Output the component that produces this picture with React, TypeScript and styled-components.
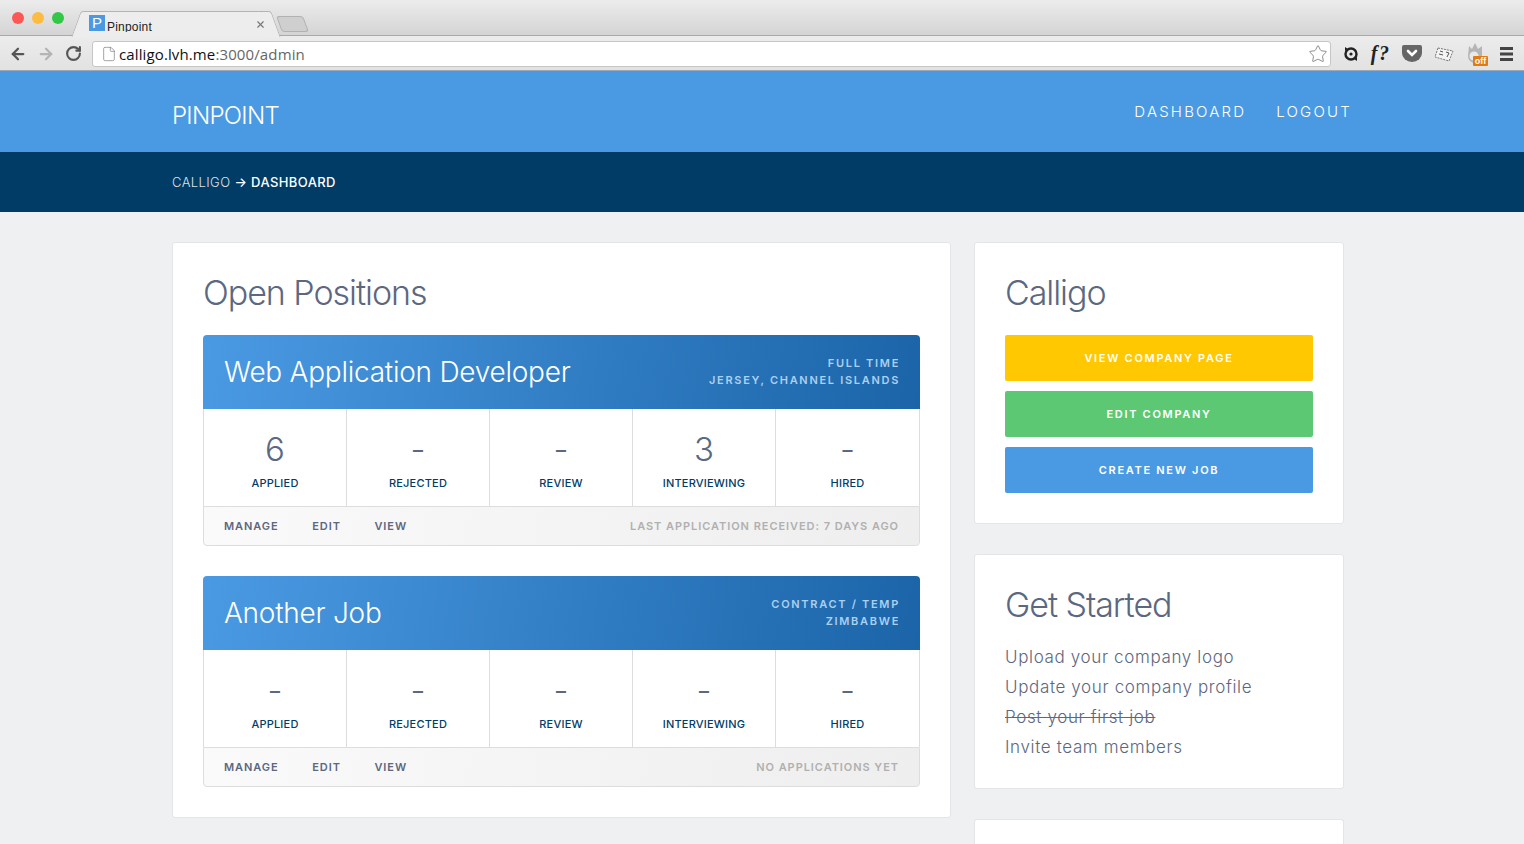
import React from 'react';
import styled, { createGlobalStyle } from 'styled-components';
import { ArrowLeft, ArrowRight, File, RotateCw, Star, X } from 'lucide-react';

const GlobalStyle = createGlobalStyle`
  html, body {
    margin: 0;
    padding: 0;
    height: 844px;
    overflow: hidden;
    background: #eff0f2;
    font-family: Inter, 'Noto Sans', sans-serif;
    color: #5c6780;
  }
  * {
    box-sizing: border-box;
  }
`;

const TabStrip = styled.div`
  height: 36px;
  padding: 11px 0 0 82px;
  display: flex;
  align-items: flex-start;
  background: linear-gradient(#ececec, #d4d4d4);
  border-bottom: 1px solid #a9a9a9;
`;

const Lights = styled.div`
  position: absolute;
  top: 12px;
  left: 12px;
  display: flex;
  gap: 8px;
`;

const Light = styled.span<{ color: string }>`
  width: 12px;
  height: 12px;
  border-radius: 50%;
  background: ${({ color }) => color};
`;

const Tab = styled.div`
  position: relative;
  width: 188px;
  height: 25px;
  background: #ededed;
  border-top: 1px solid #b4b4b4;
  border-radius: 3px 3px 0 0;
  display: flex;
  align-items: flex-start;
  padding: 3px 0 0 7px;
  overflow: visible;

  &::before,
  &::after {
    content: '';
    position: absolute;
    top: -1px;
    width: 12px;
    height: 25px;
    background: #ededed;
    border-top: 1px solid #b4b4b4;
  }
  &::before {
    left: -6px;
    transform: skewX(-20deg);
    border-left: 1px solid #b4b4b4;
    border-radius: 3px 0 0 0;
  }
  &::after {
    right: -6px;
    transform: skewX(20deg);
    border-right: 1px solid #b4b4b4;
    border-radius: 0 3px 0 0;
  }
`;

const Favicon = styled.span`
  position: relative;
  z-index: 1;
  width: 16px;
  height: 16px;
  background: #4a9ae3;
  color: #fff;
  font: 15px/16px 'Liberation Sans', sans-serif;
  text-align: center;
`;

const TabTitle = styled.span`
  position: relative;
  z-index: 1;
  margin-left: 2px;
  height: 17px;
  overflow: hidden;
  font: 12px/25px 'Liberation Sans', sans-serif;
  letter-spacing: 0.2px;
  color: #222;
  flex: 1;
`;

const TabClose = styled.span`
  position: relative;
  z-index: 1;
  margin: 4px 4px 0 0;
  display: flex;
  color: #777;
`;

const NewTab = styled.div`
  width: 27px;
  height: 16px;
  margin: 5px 0 0 9px;
  background: #cfcfcf;
  border: 1px solid #b2b2b2;
  border-radius: 3px;
  transform: skewX(20deg);
`;

const Toolbar = styled.div`
  height: 35px;
  display: flex;
  align-items: center;
  padding: 1px 11px 0 9px;
  background: linear-gradient(#ececec, #e2e2e2);
  border-bottom: 1px solid #9aa8b8;
`;

const NavIcon = styled.span<{ muted?: boolean }>`
  display: flex;
  width: 28px;
  color: ${({ muted }) => (muted ? '#b4b4b4' : '#555')};
`;

const AddressBar = styled.div`
  width: 1239px;
  height: 26px;
  margin-left: -1px;
  display: flex;
  align-items: center;
  padding: 0 2px 0 8px;
  background: #fff;
  border: 1px solid #c6c6c6;
  border-radius: 3px;
`;

const Url = styled.div`
  flex: 1;
  margin-left: 2px;
  font: 15px 'Open Sans', sans-serif;
  letter-spacing: 0.12px;
  color: #666;
`;

const UrlHost = styled.span`
  color: #111;
`;

const Extensions = styled.div`
  flex: 1;
  display: flex;
  align-items: center;
  justify-content: space-between;
  padding-left: 12px;
`;

const FontQuery = styled.span`
  font: italic 700 20px 'Liberation Serif', serif;
  color: #222;
  letter-spacing: 1.5px;
`;

const OffIcon = styled.span`
  position: relative;
  display: flex;
  width: 22px;
  height: 24px;
`;

const OffBadge = styled.span`
  position: absolute;
  right: 0;
  bottom: 0;
  width: 15px;
  height: 10px;
  background: #e07b10;
  border-radius: 1px;
  color: #fff;
  font: 700 9px/10px 'Liberation Sans', sans-serif;
  text-align: center;
`;

const Header = styled.header`
  height: 81px;
  padding: 0 172px;
  display: flex;
  justify-content: space-between;
  align-items: flex-start;
  background: #4a9ae3;
  color: #fff;
`;

const Brand = styled.div`
  margin-top: 29px;
  font-size: 24px;
  line-height: 32px;
  font-weight: 300;
  letter-spacing: -0.7px;
`;

const Nav = styled.nav`
  display: flex;
  gap: 30px;
  margin-top: 31px;
`;

const NavLink = styled.a`
  font-size: 15px;
  line-height: 20px;
  font-weight: 300;
  letter-spacing: 2.2px;
`;

const SubNav = styled.div`
  height: 60px;
  padding-left: 172px;
  display: flex;
  align-items: center;
  gap: 4px;
  background: #003c66;
  color: #fff;
  font-size: 13px;
  letter-spacing: 0.4px;
`;

const Crumb = styled.span<{ active?: boolean }>`
  font-weight: ${({ active }) => (active ? 500 : 300)};
  opacity: ${({ active }) => (active ? 1 : 0.85)};
`;

const Page = styled.main`
  display: grid;
  grid-template-columns: 779px 370px;
  gap: 23px;
  padding: 30px 0 0 172px;
  align-items: start;
`;

const Column = styled.div`
  display: flex;
  flex-direction: column;
  gap: 30px;
`;

const Card = styled.section`
  padding: 31px 30px 30px;
  background: #fff;
  border: 1px solid #e4e5e8;
  border-radius: 3px;
`;

const CardTitle = styled.h2`
  margin: 0 0 21px;
  height: 40px;
  font-size: 34px;
  line-height: 38px;
  font-weight: 300;
  letter-spacing: -1.05px;
  color: #5c6780;
`;

const Job = styled.article`
  margin-bottom: 30px;

  &:last-child {
    margin-bottom: 0;
  }
`;

const JobHeader = styled.div`
  height: 74px;
  padding: 0 20px 0 21px;
  display: flex;
  justify-content: space-between;
  align-items: center;
  border-radius: 4px 4px 0 0;
  background: linear-gradient(100deg, #4a9ae3, #1b64a8);
  color: #fff;
`;

const JobTitle = styled.h3`
  margin: 0;
  font-size: 28px;
  font-weight: 300;
  letter-spacing: -0.25px;
`;

const JobMeta = styled.div`
  text-align: right;
  font-size: 11px;
  line-height: 17px;
  font-weight: 600;
  letter-spacing: 1.7px;
  color: #acd0f0;
`;

const Stats = styled.div`
  display: grid;
  grid-template-columns: repeat(5, 1fr);
  height: 97px;
  border-left: 1px solid #ddd;
  border-right: 1px solid #ddd;
`;

const Stat = styled.div`
  padding-top: 20px;
  display: flex;
  flex-direction: column;
  align-items: center;
  border-right: 1px solid #ddd;

  &:last-child {
    border-right: 0;
  }
`;

const StatValue = styled.div`
  height: 40px;
  font-size: 33px;
  line-height: 40px;
  font-weight: 300;
  color: #5c6780;
`;

const StatLabel = styled.div`
  margin-top: 7px;
  font-size: 11px;
  line-height: 14px;
  font-weight: 500;
  letter-spacing: 0.2px;
  color: #003c66;
`;

const JobFooter = styled.div`
  height: 40px;
  padding: 0 20px;
  display: flex;
  align-items: center;
  gap: 33.5px;
  background: linear-gradient(100deg, #fafafa, #eeeeee);
  border: 1px solid #ddd;
  border-radius: 0 0 4px 4px;
  font-size: 11px;
  font-weight: 600;
  letter-spacing: 0.95px;
`;

const FooterLink = styled.a`
  color: #5c6780;
`;

const FooterNote = styled.span`
  margin-left: auto;
  color: #b0b0b0;
`;

const ActionButton = styled.a<{ color: string }>`
  height: 46px;
  margin-bottom: 10px;
  display: flex;
  align-items: center;
  justify-content: center;
  border-radius: 2px;
  background: ${({ color }) => color};
  color: #fff;
  font-size: 11px;
  font-weight: 600;
  letter-spacing: 1.7px;

  &:last-child {
    margin-bottom: 0;
  }
`;

const Steps = styled.ul`
  list-style: none;
  margin: -5px 0 -4px;
  padding: 0;
`;

const Step = styled.li<{ done?: boolean }>`
  height: 30px;
  font-size: 17px;
  line-height: 30px;
  font-weight: 300;
  letter-spacing: 0.64px;
  text-decoration: ${({ done }) => (done ? 'line-through' : 'none')};
`;

const EmptyCard = styled(Card)`
  height: 25px;
  padding: 0;
  border-bottom: 0;
  border-radius: 3px 3px 0 0;
`;

const STATUSES = ['Applied', 'Rejected', 'Review', 'Interviewing', 'Hired'];

const JOBS = [
  {
    title: 'Web Application Developer',
    type: 'Full Time',
    place: 'Jersey, Channel Islands',
    counts: ['6', '-', '-', '3', '-'],
    note: 'Last application received: 7 days ago',
  },
  {
    title: 'Another Job',
    type: 'Contract / Temp',
    place: 'Zimbabwe',
    counts: ['-', '-', '-', '-', '-'],
    note: 'No applications yet',
  },
];

const STEPS = [
  { text: 'Upload your company logo' },
  { text: 'Update your company profile' },
  { text: 'Post your first job', done: true },
  { text: 'Invite team members' },
];

const BrowserChrome: React.FC = () => (
  <>
    <Lights>
      <Light color="#fc5753" />
      <Light color="#fdbc40" />
      <Light color="#33c748" />
    </Lights>
    <TabStrip>
      <Tab>
        <Favicon>P</Favicon>
        <TabTitle>Pinpoint</TabTitle>
        <TabClose>
          <X size={11} strokeWidth={2.5} />
        </TabClose>
      </Tab>
      <NewTab />
    </TabStrip>
    <Toolbar>
      <NavIcon>
        <ArrowLeft size={18} strokeWidth={3} />
      </NavIcon>
      <NavIcon muted>
        <ArrowRight size={18} strokeWidth={3} />
      </NavIcon>
      <NavIcon>
        <RotateCw size={17} strokeWidth={3} />
      </NavIcon>
      <AddressBar>
        <File size={16} strokeWidth={1} color="#777" />
        <Url>
          <UrlHost>calligo.lvh.me</UrlHost>:3000/admin
        </Url>
        <Star size={20} strokeWidth={1} color="#777" />
      </AddressBar>
      <Extensions>
        <svg width="16" height="16" viewBox="0 0 16 16" fill="none">
          <circle cx="8" cy="8" r="5.5" stroke="#222" strokeWidth="2.4" />
          <circle cx="8" cy="8" r="1.6" fill="#222" />
          <path d="M2 1l3 2-3 2zM14 15l-3-2 3-2z" fill="#222" />
        </svg>
        <FontQuery>f?</FontQuery>
        <svg width="20" height="17" viewBox="0 0 20 17">
          <path d="M2 0h16a2 2 0 012 2v6a10 9 0 01-20 0V2a2 2 0 012-2z" fill="#666" />
          <path d="M6 6l4 4 4-4" fill="none" stroke="#fff" strokeWidth="2.6" strokeLinecap="round" />
        </svg>
        <svg width="20" height="16" viewBox="0 0 20 16" fill="none">
          <path d="M4 2l15 3-4 10L1 11z" fill="#f4f4f4" stroke="#777" strokeDasharray="2 1" />
          <path d="M6 5l3 1M5 8l4 1M12 6l3 1-2 4" stroke="#555" />
        </svg>
        <OffIcon>
          <svg width="20" height="22" viewBox="0 0 20 22">
            <path d="M3 4l3 3 3-6 3 6 4-3v10a7 7 0 01-14 0z" fill="#b5b5b5" />
            <circle cx="8" cy="14" r="4.5" fill="#e9e9e9" />
          </svg>
          <OffBadge>off</OffBadge>
        </OffIcon>
        <svg width="13" height="14" viewBox="0 0 13 14">
          <path d="M0 0h13v3H0zM0 5.5h13v3H0zM0 11h13v3H0z" fill="#444" />
        </svg>
      </Extensions>
    </Toolbar>
  </>
);

const JobCard: React.FC<{ job: (typeof JOBS)[number] }> = ({ job }) => (
  <Job>
    <JobHeader>
      <JobTitle>{job.title}</JobTitle>
      <JobMeta>
        {job.type.toUpperCase()}
        <br />
        {job.place.toUpperCase()}
      </JobMeta>
    </JobHeader>
    <Stats>
      {STATUSES.map((status, i) => (
        <Stat key={status}>
          <StatValue>{job.counts[i]}</StatValue>
          <StatLabel>{status.toUpperCase()}</StatLabel>
        </Stat>
      ))}
    </Stats>
    <JobFooter>
      <FooterLink>MANAGE</FooterLink>
      <FooterLink>EDIT</FooterLink>
      <FooterLink>VIEW</FooterLink>
      <FooterNote>{job.note.toUpperCase()}</FooterNote>
    </JobFooter>
  </Job>
);

const App: React.FC = () => (
  <>
    <GlobalStyle />
    <BrowserChrome />
    <Header>
      <Brand>PINPOINT</Brand>
      <Nav>
        <NavLink>DASHBOARD</NavLink>
        <NavLink>LOGOUT</NavLink>
      </Nav>
    </Header>
    <SubNav>
      <Crumb>CALLIGO</Crumb>
      <Crumb active>→ DASHBOARD</Crumb>
    </SubNav>
    <Page>
      <Card>
        <CardTitle>Open Positions</CardTitle>
        {JOBS.map((job) => (
          <JobCard key={job.title} job={job} />
        ))}
      </Card>
      <Column>
        <Card>
          <CardTitle>Calligo</CardTitle>
          <ActionButton color="#ffc800">VIEW COMPANY PAGE</ActionButton>
          <ActionButton color="#5cc873">EDIT COMPANY</ActionButton>
          <ActionButton color="#4a9ae3">CREATE NEW JOB</ActionButton>
        </Card>
        <Card>
          <CardTitle>Get Started</CardTitle>
          <Steps>
            {STEPS.map((step) => (
              <Step key={step.text} done={step.done}>
                {step.text}
              </Step>
            ))}
          </Steps>
        </Card>
        <EmptyCard />
      </Column>
    </Page>
  </>
);

export default App;
